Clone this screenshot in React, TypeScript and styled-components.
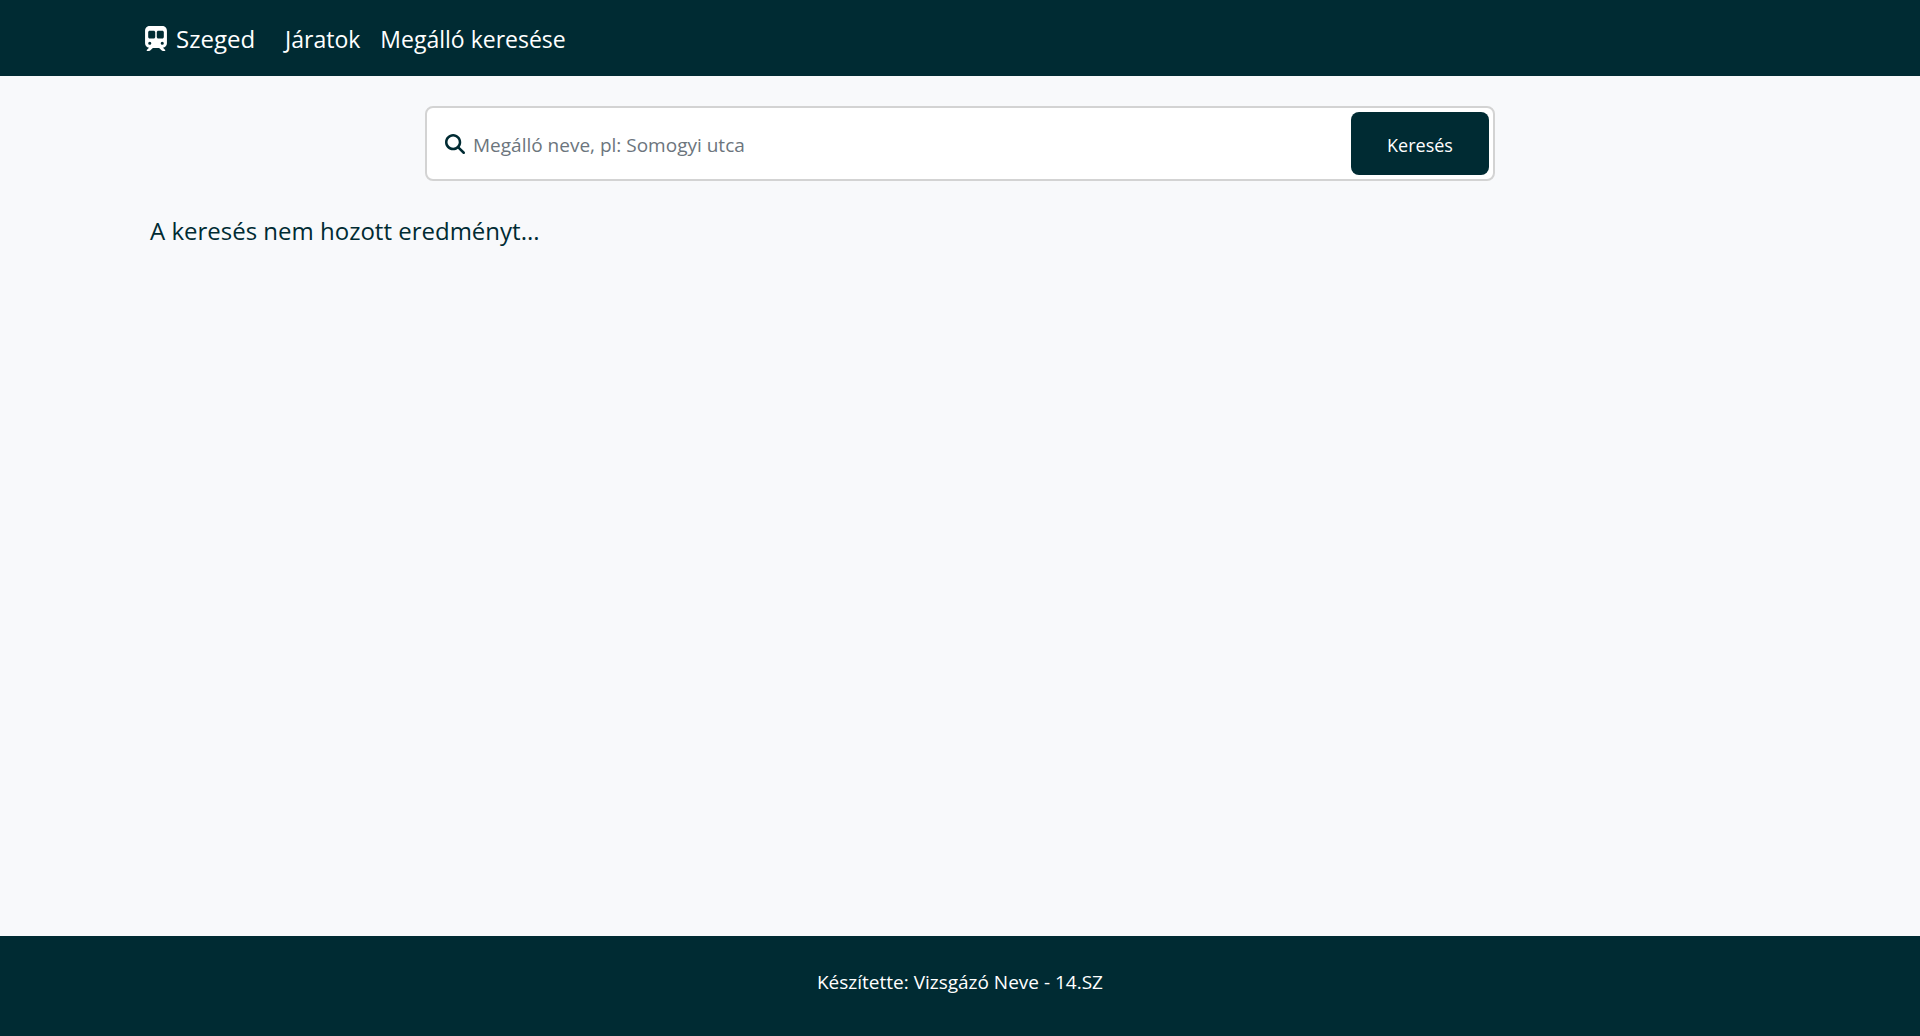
import React from "react";
import styled, { createGlobalStyle } from "styled-components";
import { FaMagnifyingGlass, FaTrainSubway } from "react-icons/fa6";

const dark = "#002b33";

const GlobalStyle = createGlobalStyle`
  *, *::before, *::after { box-sizing: border-box; }
  body {
    margin: 0;
    background: #f8f9fb;
    color: ${dark};
    font-family: "Open Sans", "Noto Sans", sans-serif;
    font-size: 19px;
  }
`;

const Page = styled.div`
  min-height: 100vh;
  display: flex;
  flex-direction: column;
`;

const Header = styled.header`
  background: ${dark};
  padding: 0 7.5%;
`;

const Nav = styled.nav`
  display: flex;
  align-items: center;
  min-height: 76px;
`;

const Brand = styled.a`
  display: flex;
  align-items: center;
  gap: 8px;
  margin-right: 30px;
  color: #fff;
  font-size: 24px;
  line-height: 36px;
  text-decoration: none;
`;

const BrandName = styled.span`
  padding-top: 2px;
`;

const TrainIcon = styled(FaTrainSubway)`
  width: 24px;
  height: 25px;
`;

const Links = styled.ul`
  display: flex;
  gap: 20px;
  margin: 0;
  padding: 2px 0 0;
  list-style: none;
`;

const NavLink = styled.a`
  color: #fff;
  font-size: 23px;
  line-height: 36px;
  text-decoration: none;
`;

const Main = styled.main`
  flex: 1;
  padding: 30px 150px;
`;

const SearchForm = styled.form`
  display: flex;
  align-items: stretch;
  max-width: 1070px;
  margin: 0 auto;
  padding: 4px;
  background: #fff;
  border: 2px solid #d3d3d3;
  border-radius: 8px;
`;

const SearchLabel = styled.label`
  flex: 1;
  display: flex;
  align-items: center;
  gap: 8px;
  padding-left: 14px;
`;

const SearchInput = styled.input`
  flex: 1;
  min-width: 0;
  padding: 2px 0 0;
  border: 0;
  outline: 0;
  background: transparent;
  color: ${dark};
  font: inherit;
  line-height: 30px;

  &::placeholder {
    color: #6c757d;
    opacity: 1;
  }
`;

const SearchButton = styled.button`
  width: 138px;
  height: 63px;
  padding: 2px 0 0;
  border: 0;
  border-radius: 8px;
  background: ${dark};
  color: #fff;
  font: inherit;
  font-size: 18px;
  cursor: pointer;
`;

const Message = styled.p`
  margin: 32px 0 0;
  font-size: 24px;
  line-height: 36px;
`;

const Footer = styled.footer`
  min-height: 100px;
  padding: 31px 30px;
  background: ${dark};
  color: #fff;
  line-height: 30px;
  text-align: center;
`;

export default function App() {
  return (
    <Page>
      <GlobalStyle />
      <Header>
        <Nav>
          <Brand href="#">
            <TrainIcon aria-hidden />
            <BrandName>Szeged</BrandName>
          </Brand>
          <Links>
            <li><NavLink href="#jaratok">Járatok</NavLink></li>
            <li><NavLink href="#megallo">Megálló keresése</NavLink></li>
          </Links>
        </Nav>
      </Header>
      <Main>
        <SearchForm onSubmit={(e: React.FormEvent) => e.preventDefault()}>
          <SearchLabel>
            <FaMagnifyingGlass size={20} aria-hidden />
            <SearchInput
              type="text"
              aria-label="Megálló neve"
              placeholder="Megálló neve, pl: Somogyi utca"
            />
          </SearchLabel>
          <SearchButton type="submit">Keresés</SearchButton>
        </SearchForm>
        <Message>A keresés nem hozott eredményt...</Message>
      </Main>
      <Footer>Készítette: Vizsgázó Neve - 14.SZ</Footer>
    </Page>
  );
}
